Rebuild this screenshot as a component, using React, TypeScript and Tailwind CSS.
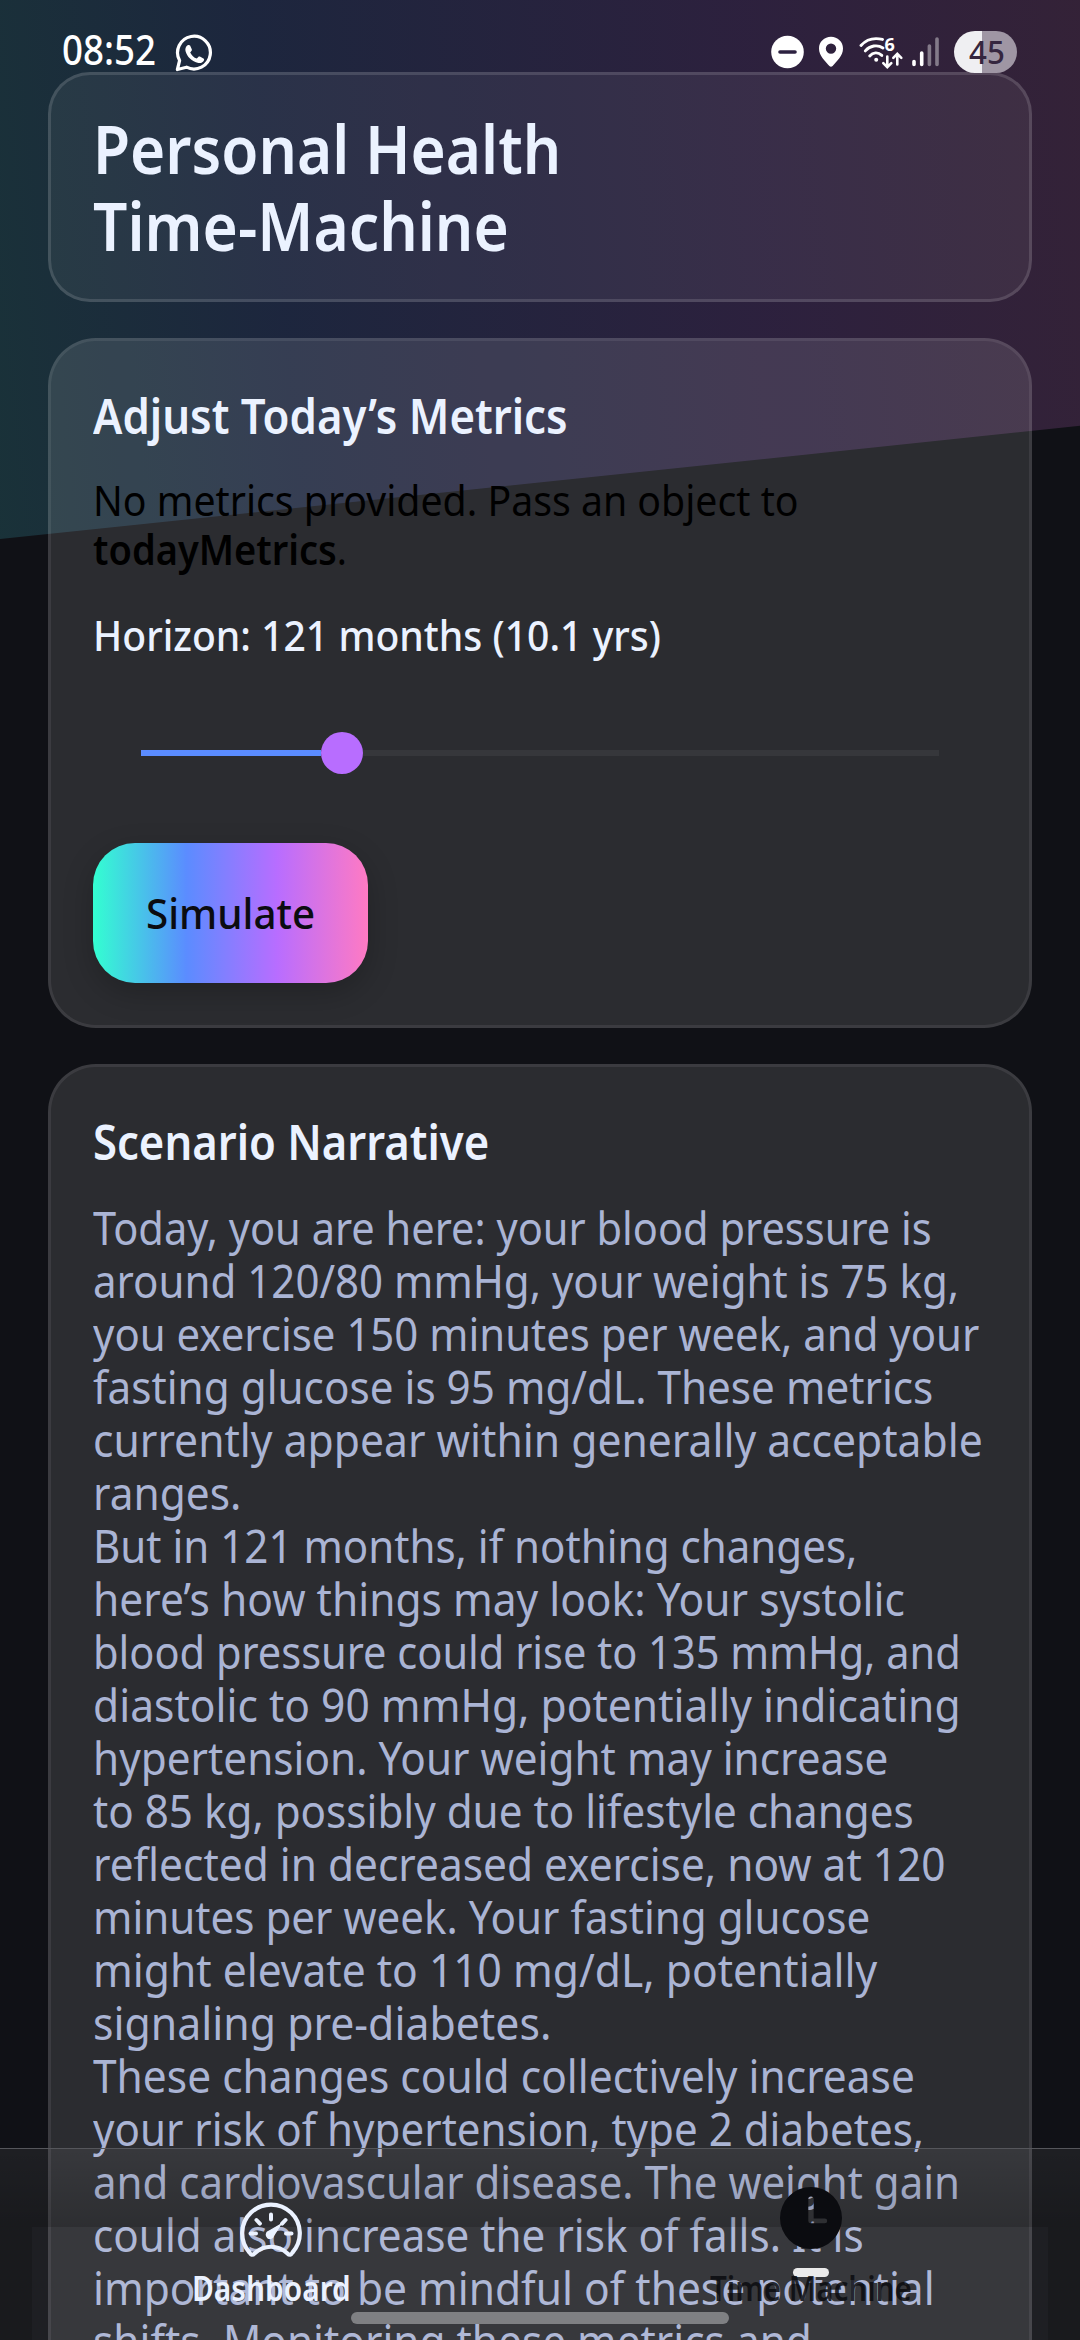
import React, { useLayoutEffect, useRef, useState } from 'react';

interface FitTextProps {
    className?: string;
    width?: number;
    children: React.ReactNode;
}

/**
 * Single line of text, condensed horizontally to the width of its box
 */
const FitText: React.FC<FitTextProps> = ({ className = '', width, children }) => {
    const box = useRef<HTMLDivElement>(null);
    const text = useRef<HTMLSpanElement>(null);
    const [scale, setScale] = useState(1);

    useLayoutEffect(() => {
        if (box.current && text.current) {
            setScale(box.current.clientWidth / text.current.offsetWidth);
        }
    }, []);

    return (
        <div ref={box} className={`whitespace-nowrap ${className}`} style={width ? { width } : undefined}>
            <span ref={text} className="inline-block origin-left" style={{ transform: `scaleX(${scale})` }}>
                {children}
            </span>
        </div>
    );
};

const narrative: { text: string; width: number }[] = [
    { text: 'Today, you are here: your blood pressure is', width: 839 },
    { text: 'around 120/80 mmHg, your weight is 75 kg,', width: 866 },
    { text: 'you exercise 150 minutes per week, and your', width: 886 },
    { text: 'fasting glucose is 95 mg/dL. These metrics', width: 840 },
    { text: 'currently appear within generally acceptable', width: 890 },
    { text: 'ranges.', width: 148 },
    { text: 'But in 121 months, if nothing changes,', width: 764 },
    { text: 'here’s how things may look: Your systolic', width: 812 },
    { text: 'blood pressure could rise to 135 mmHg, and', width: 868 },
    { text: 'diastolic to 90 mmHg, potentially indicating', width: 868 },
    { text: 'hypertension. Your weight may increase', width: 795 },
    { text: 'to 85 kg, possibly due to lifestyle changes', width: 821 },
    { text: 'reflected in decreased exercise, now at 120', width: 853 },
    { text: 'minutes per week. Your fasting glucose', width: 777 },
    { text: 'might elevate to 110 mg/dL, potentially', width: 784 },
    { text: 'signaling pre-diabetes.', width: 458 },
    { text: 'These changes could collectively increase', width: 822 },
    { text: 'your risk of hypertension, type 2 diabetes,', width: 831 },
    { text: 'and cardiovascular disease. The weight gain', width: 867 },
    { text: 'could also increase the risk of falls. It is', width: 771 },
    { text: 'important to be mindful of these potential', width: 842 },
    { text: 'shifts. Monitoring these metrics and', width: 719 },
];

const WhatsAppIcon = () => (
    <svg width="38" height="38" viewBox="0 0 38 38" fill="none">
        <path
            d="M4.600 26.500A16.400 16.400 0 1 1 11.500 33.200L2.400 35.500Z"
            stroke="white"
            strokeWidth="3.2"
            strokeLinejoin="round"
        />
        <path
            d="M12.6 11.2c.9-.5 2.1-.4 2.5.4l1.700 3.700c.3.7.1 1.300-.4 1.800l-1.200 1.300c1.500 3 3.600 5 6.600 6.200l1.500-1.700c.4-.5 1-.6 1.600-.3l3.500 1.800c.7.4.9 1 .6 1.800-1 2.300-3.200 3.200-5.600 2.700-6.600-1.400-11.500-6.200-12.900-11.900-.5-2.300.3-4.600 2.100-5.800z"
            fill="white"
        />
    </svg>
);

const WifiIcon = () => (
    <svg width="45" height="42" viewBox="0 0 45 42" fill="none" stroke="white" strokeWidth="2.9" strokeLinecap="round">
        <path d="M2 14.5C7.5 8.3 15.5 6.5 23.5 8.4" />
        <path d="M6.3 19.9C11 14.6 18.3 13.2 24 17" />
        <path d="M10.7 25C14 21.2 19 20.8 22.8 24.4" />
        <circle cx="17.2" cy="28.8" r="2" fill="white" stroke="none" />
        <path d="M28.3 25.5v10M24.3 32.2l4 4 4-4" strokeWidth="2.6" />
        <path d="M38.3 33.5v-10M34.3 26.8l4-4 4 4" strokeWidth="2.6" />
        <text x="25.5" y="19.5" fill="white" stroke="none" fontSize="18" fontWeight="700" fontFamily="Noto Sans, sans-serif">6</text>
    </svg>
);

const StatusBar = () => (
    <div className="relative z-10 flex h-[72px] items-start justify-between pl-[62px] pr-[63px] text-white">
        <div className="flex pt-[25px]">
            <FitText className="w-[94px] text-[41px] leading-[48px] font-medium">08:52</FitText>
            <div className="ml-[19px] pt-[9px]">
                <WhatsAppIcon />
            </div>
        </div>
        <div className="flex pt-[31px]">
            <svg width="33" height="42" viewBox="0 0 33 42">
                <circle cx="16.5" cy="21" r="16.3" fill="white" />
                <path d="M9 21h15" stroke="#2c2140" strokeWidth="3.6" strokeLinecap="round" />
            </svg>
            <svg className="ml-[15px]" width="24" height="42" viewBox="0 0 24 42">
                <path
                    d="M12 5.8c6.700 0 12 5.100 12 11.700 0 7.500-6.300 12.800-10.400 17.400-.9 1-2.300 1-3.200 0C6.300 30.300 0 25 0 17.500 0 10.900 5.300 5.800 12 5.800zm0 6.600a5.200 5.200 0 1 0 0 10.400 5.200 5.200 0 0 0 0-10.400z"
                    fill="white"
                    fillRule="evenodd"
                />
            </svg>
            <div className="ml-4">
                <WifiIcon />
            </div>
            <svg className="ml-2" width="28" height="42" viewBox="0 0 28 42" stroke="white" strokeWidth="3.6" strokeLinecap="round">
                <path d="M2 30.5v3M9.7 22v11.500" />
                <path d="M17.4 15v18.500M25 8v25.500" opacity="0.4" />
            </svg>
            <div className="ml-[14px] flex h-[42px] w-[63px] rounded-full bg-[linear-gradient(90deg,#efeff2_28px,#9f96a4_28px)]">
                <FitText className="ml-[15px] w-[36px] text-[33px] leading-[41px] font-medium text-[#35263f]">45</FitText>
            </div>
        </div>
    </div>
);

const HorizonSlider = () => (
    <div className="mt-[69px] ml-12 flex h-[42px] w-[798px] items-center">
        <div className="h-1.5 w-[180px] bg-[#5b8cff]" />
        <div className="size-[42px] rounded-full bg-[#b86dff]" />
        <div className="h-1.5 flex-1 bg-[#36373b]" />
    </div>
);

const GaugeIcon = () => (
    <svg width="62" height="60" viewBox="0 0 62 60" fill="none" stroke="#ebf2ff" strokeLinecap="round" strokeLinejoin="round">
        <path
            d="M9.5 52.5A28.8 28.8 0 1 1 52.5 52.5C51 55 49.5 55.5 47.5 53.5C38 44.5 24 44.5 14.5 53.5C12.5 55.5 11 55 9.5 52.5Z"
            strokeWidth="4.2"
        />
        <path d="M31 14.5v5M16.5 20l3.4 3.6M45.5 20l-3.4 3.6M10.5 33.5h5.5M46 33.5h5.5" strokeWidth="4" />
        <path d="M40.5 24.5L28.5 31.500a3.600 3.600 0 1 0 5 4Z" fill="#ebf2ff" strokeWidth="1.4" />
    </svg>
);

const ClockIcon = () => (
    <svg width="62" height="62" viewBox="0 0 62 62">
        <path
            d="M31 0a31 31 0 1 1 0 62 31 31 0 0 1 0-62zM31 9.500a2.700 2.700 0 0 0-2.700 2.700V34a2.300 2.300 0 0 0 2.300 2.300h14.200a2.400 2.400 0 0 0 0-4.800H33.700V12.200A2.700 2.700 0 0 0 31 9.500z"
            fill="#0b0c10"
            fillRule="evenodd"
        />
    </svg>
);

const BottomNav = () => (
    <div className="absolute inset-x-0 bottom-0 h-48 border-t border-[#55565b] bg-white/6">
        {/* soft shadow on the bar */}
        <div className="absolute inset-0 flex flex-col">
            <div className="h-[78px] bg-linear-to-b from-black/0 to-black/18" />
            <div className="flex flex-1 justify-between">
                <div className="w-8 bg-black/15" />
                <div className="w-8 bg-black/15" />
            </div>
        </div>
        <div className="relative grid h-full grid-cols-2">
            <div className="flex flex-col items-center pt-[51px] pl-0.5">
                <GaugeIcon />
                <FitText className="mt-[6px] w-[159px] text-[34px] leading-[44px] font-semibold text-[#ebf2ff]">Dashboard</FitText>
            </div>
            <div className="flex flex-col items-center pt-[38px] pl-0.5">
                <ClockIcon />
                <div className="mt-[19px] h-[9px] w-9 rounded-full bg-[#ebebeb]" />
                <FitText className="relative -mt-[11px] w-[202px] text-[34px] leading-[44px] font-semibold text-[#0b0c10]/85">Time Machine</FitText>
            </div>
        </div>
        <div className="absolute bottom-4 left-[351px] h-3 w-[378px] rounded-full bg-[#7f8083]" />
    </div>
);

export default function App() {
    return (
        <div className="relative h-[2340px] w-[1080px] overflow-hidden bg-[#101116] font-['Noto_Sans',sans-serif] text-[#ebf2ff]">
            {/* slanted aurora behind the cards */}
            <div className="absolute inset-x-0 top-0 h-[539px] bg-[linear-gradient(84deg,#3bffd1_-17%,#5b8cff_27%,#b86dff_70%,#ff7ac3_120%)] opacity-[0.17] [clip-path:polygon(0_0,100%_0,100%_79%,0_100%)]" />

            <div className="relative">
                <StatusBar />

                <div className="mx-auto h-[230px] w-[984px] rounded-[42px] border-3 border-white/13 bg-white/6 pt-[35px] pl-[42px] text-[67px] leading-[77px] font-semibold">
                    <FitText className="w-[468px]">Personal Health</FitText>
                    <FitText className="w-[416px]">Time-Machine</FitText>
                </div>

                <div className="mx-auto mt-9 h-[690px] w-[984px] rounded-[48px] border-3 border-white/8 bg-white/[0.115] pt-11 pl-[42px]">
                    <FitText className="w-[475px] text-[49px] leading-[60px] font-semibold">Adjust Today’s Metrics</FitText>
                    <div className="mt-[31px] text-[41px] leading-[49px] text-black">
                        <FitText className="w-[706px]">No metrics provided. Pass an object to</FitText>
                        <FitText className="w-[254px]"><b className="font-semibold">todayMetrics</b>.</FitText>
                    </div>
                    <FitText className="mt-[33px] w-[568px] text-[42px] leading-[56px] font-medium">Horizon: 121 months (10.1 yrs)</FitText>
                    <HorizonSlider />
                    <button className="mt-[69px] flex h-[140px] w-[275px] items-center justify-center rounded-[42px] bg-[linear-gradient(90deg,#33ffd1,#5b8cff_34%,#b86dff_67%,#ff7ac3)] text-[42px] leading-[56px] font-medium text-[#0b0c10] shadow-[0_10px_30px_rgba(0,0,0,0.22)]">
                        <FitText className="w-[169px] text-left">Simulate</FitText>
                    </button>
                </div>

                <div className="mx-auto mt-9 h-[1400px] w-[984px] rounded-[48px] border-3 border-white/8 bg-white/[0.115] pt-11 pl-[42px]">
                    <FitText className="w-[396px] text-[49px] leading-[60px] font-semibold">Scenario Narrative</FitText>
                    <div className="mt-[30px] text-[45px] leading-[53px] text-[#aab4d4]">
                        {narrative.map((line) => (
                            <FitText key={line.text} width={line.width}>{line.text}</FitText>
                        ))}
                    </div>
                </div>
            </div>

            <BottomNav />
        </div>
    );
}
